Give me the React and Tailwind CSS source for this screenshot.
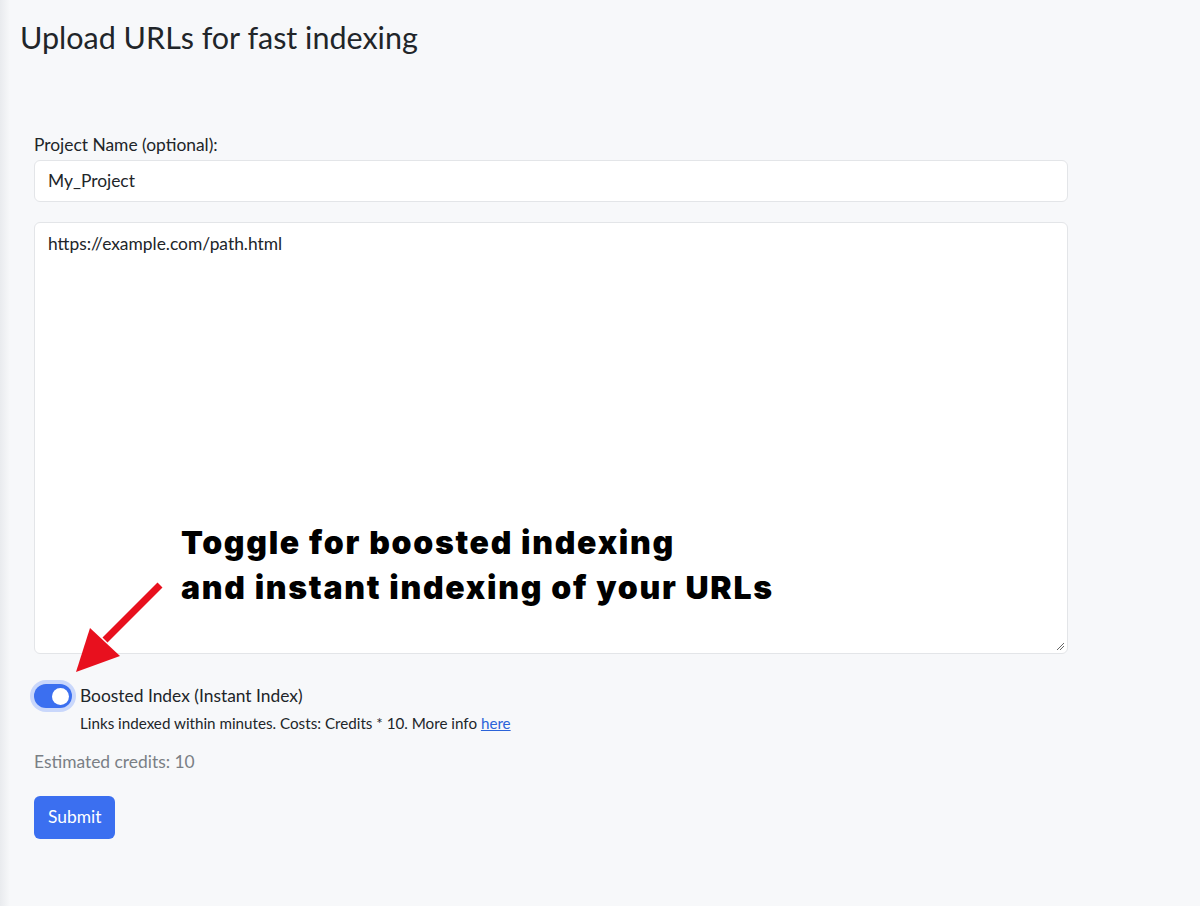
export default function App() {
  return (
    <div className="relative min-h-[906px] w-[1200px] bg-[#f7f8fa] text-[#212529]" style={{ fontFamily: "Lato, 'Noto Sans', sans-serif" }}>
      <div className="pointer-events-none absolute left-0 top-0 h-full w-[10px] bg-gradient-to-r from-[#e9ebee] to-[#f7f8fa]" />
      <div className="relative pl-[20px] pt-[17px]">
        <h1 className="text-[30.5px] leading-[40px] text-[#212529]">Upload URLs for fast indexing</h1>
      </div>
      <div className="relative w-[1034px] pl-[34px] pt-[76px]" style={{ boxSizing: "content-box" }}>
        <label className="block text-[17.4px] leading-[24px]">Project Name (optional):</label>
        <div className="mt-[3px] flex h-[42px] items-center rounded-md border border-[#e3e5e8] bg-white px-[13px] text-[17.4px]">My_Project</div>
        <div className="relative mt-[20px] h-[432px] rounded-md border border-[#e3e5e8] bg-white px-[13px] pt-[8px] text-[17.4px]">
          https://example.com/path.html
          <svg className="absolute bottom-[2px] right-[2px]" width="10" height="10" viewBox="0 0 10 10">
            <path d="M9 2 L2 9 M9 5 L5 9" stroke="#666" strokeWidth="1" />
          </svg>
        </div>
        <div className="mt-[30px] flex items-center gap-[8px]">
          <div className="flex h-[24px] w-[38px] items-center justify-end rounded-full bg-[#3b6ff0] pr-[3px] ring-4 ring-[#c9d7fb]">
            <div className="h-[17px] w-[17px] rounded-full bg-white" />
          </div>
          <span className="text-[17.4px] leading-[24px]">Boosted Index (Instant Index)</span>
        </div>
        <div className="mt-[4px] pl-[46px] text-[15.2px] leading-[22px]">
          Links indexed within minutes. Costs: Credits * 10. More info <a className="text-[#2b63d9] underline">here</a>
        </div>
        <div className="mt-[16px] text-[17.4px] leading-[24px] text-[#7a7f85]">Estimated credits: 10</div>
        <button className="mt-[22px] h-[43px] rounded-md bg-[#3b6ff0] px-[14px] text-[17.4px] text-white">Submit</button>
      </div>
      <div className="absolute left-[181px] top-[520px] text-[32px] font-black leading-[45px] tracking-[1.7px] text-black" style={{ fontFamily: "Inter, 'DejaVu Sans', sans-serif" }}>
        <div>Toggle for boosted indexing</div>
        <div>and instant indexing of your URLs</div>
      </div>
      <svg className="absolute left-[70px] top-[580px]" width="100" height="100" viewBox="0 0 100 100">
        <line x1="90" y1="5" x2="35" y2="60" stroke="#e8101e" strokeWidth="7" />
        <polygon points="6,92 20,48 50,76" fill="#e8101e" />
      </svg>
    </div>
  );
}
